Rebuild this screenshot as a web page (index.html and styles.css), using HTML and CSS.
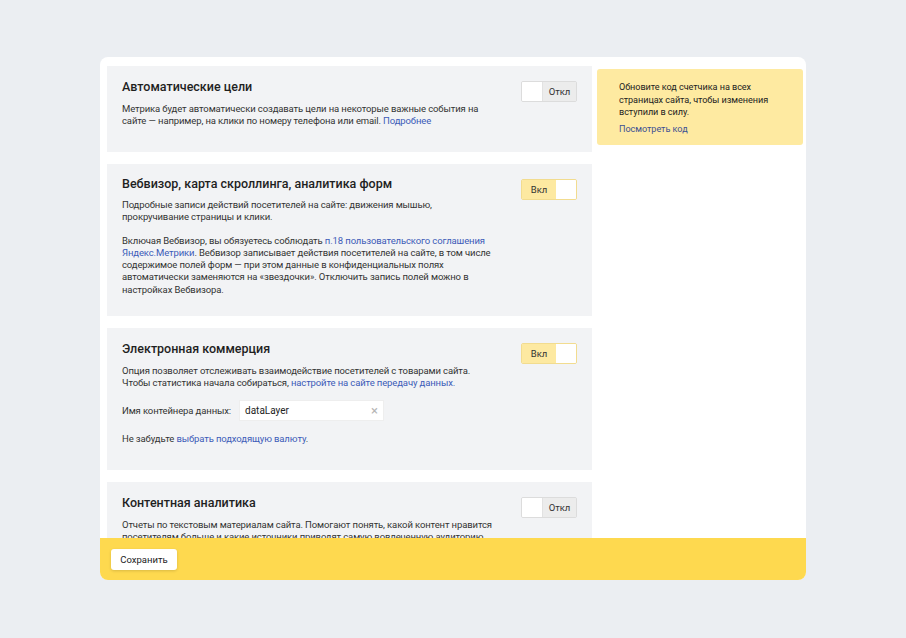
FILE: index.html
```html
<!DOCTYPE html>
<html lang="ru">
<head>
<meta charset="utf-8">
<link rel="stylesheet" href="styles.css">
</head>
<body>
<div class="card">
  <div class="content">
    <div class="main">
      <section class="opt opt-1">
        <div class="opt-text">
          <h2 class="title">Автоматические цели</h2>
          <p class="desc">Метрика будет автоматически создавать цели на некоторые важные события на сайте — например, на клики по номеру телефона или email. <a class="link">Подробнее</a></p>
        </div>
        <div class="toggle off"><span class="knob"></span><span class="label">Откл</span></div>
      </section>
      <section class="opt opt-2">
        <div class="opt-text">
          <h2 class="title">Вебвизор, карта скроллинга, аналитика форм</h2>
          <p class="desc">Подробные записи действий посетителей на сайте: движения мышью,<br>прокручивание страницы и клики.</p>
          <p class="desc gap">Включая Вебвизор, вы обязуетесь соблюдать <a class="link">п.18 пользовательского соглашения Яндекс.Метрики</a>. Вебвизор записывает действия посетителей на сайте, в том числе содержимое полей форм — при этом данные в конфиденциальных полях автоматически заменяются на «звездочки». Отключить запись полей можно в настройках Вебвизора.</p>
        </div>
        <div class="toggle on"><span class="label">Вкл</span><span class="knob"></span></div>
      </section>
      <section class="opt opt-3">
        <div class="opt-text">
          <h2 class="title">Электронная коммерция</h2>
          <p class="desc">Опция позволяет отслеживать взаимодействие посетителей с товарами сайта.<br>Чтобы статистика начала собираться, <a class="link">настройте на сайте передачу данных.</a></p>
          <div class="field">
            <span class="field-label">Имя контейнера данных:</span>
            <div class="input"><span class="input-val">dataLayer</span><span class="clear">×</span></div>
          </div>
          <p class="desc note">Не забудьте <a class="link">выбрать подходящую валюту</a>.</p>
        </div>
        <div class="toggle on"><span class="label">Вкл</span><span class="knob"></span></div>
      </section>
      <section class="opt opt-4">
        <div class="opt-text">
          <h2 class="title">Контентная аналитика</h2>
          <p class="desc">Отчеты по текстовым материалам сайта. Помогают понять, какой контент нравится посетителям больше и какие источники приводят самую вовлеченную аудиторию.</p>
        </div>
        <div class="toggle off"><span class="knob"></span><span class="label">Откл</span></div>
      </section>
    </div>
    <aside class="side">
      <div class="notice">
        <p class="notice-text">Обновите код счетчика на всех<br>страницах сайта, чтобы изменения<br>вступили в силу.</p>
        <a class="notice-link">Посмотреть код</a>
      </div>
    </aside>
  </div>
  <footer class="footer">
    <button class="save">Сохранить</button>
  </footer>
</div>
</body>
</html>
```
FILE: styles.css
```css
* { box-sizing: border-box; }
html, body { margin: 0; padding: 0; }
body {
  background: #ebeef2;
  font-family: Roboto, "Noto Sans", Arial, sans-serif;
  color: #222;
  padding: 57px 100px 0;
  height: 638px;
}
.card {
  width: 706px;
  height: 523px;
  background: #fff;
  border-radius: 8px;
  display: flex;
  flex-direction: column;
  overflow: hidden;
}
.content {
  flex: 1;
  overflow: hidden;
  display: flex;
  gap: 5px;
  padding: 9px 3px 0 7px;
}
.main {
  width: 485px;
  display: flex;
  flex-direction: column;
  gap: 12px;
}
.opt {
  background: #f2f3f5;
  display: flex;
  justify-content: space-between;
  padding: 13px 15px 0 15px;
  flex-shrink: 0;
}
.opt-1 { height: 86px; }
.opt-2 { height: 152px; padding-top: 12px; }
.opt-3 { height: 142px; }
.opt-4 { height: 90px; }
.opt-text { width: 374px; }
.title {
  margin: 0;
  font-size: 12.5px;
  font-weight: 500;
  line-height: 16px;
  color: #1f1f1f;
}
.desc {
  margin: 8px 0 0;
  font-size: 9.5px;
  letter-spacing: -0.12px;
  line-height: 12.3px;
  color: #333;
}
.opt-2 .desc:first-of-type { margin-top: 7px; }
.desc.gap { margin-top: 11px; }
.link { color: #3c5bb8; }
.toggle {
  width: 56px;
  height: 21px;
  border: 1px solid #dcdcdc;
  border-radius: 2px;
  display: flex;
  flex-shrink: 0;
  margin-top: 2px;
  font-size: 9.5px;
  overflow: hidden;
}
.opt-2 .toggle { margin-top: 3px; }
.toggle .knob { width: 20px; background: #fff; }
.toggle .label { flex: 1; display: flex; align-items: center; justify-content: center; color: #333; }
.toggle.off .label { background: #ececec; border-left: 1px solid #e2e2e2; }
.toggle.on { border-color: #f2dc8f; }
.toggle.on .label { background: #fde9a1; }
.field {
  display: flex;
  align-items: center;
  margin-top: 10px;
  gap: 8px;
}
.field-label { font-size: 9.5px; letter-spacing: -0.12px; color: #333; }
.input {
  width: 145px;
  height: 21px;
  background: #fff;
  border: 1px solid #eeeeee;
  display: flex;
  align-items: center;
  justify-content: space-between;
  padding: 0 5px 0 5px;
}
.input-val { font-size: 10px; color: #222; }
.clear { color: #b5b5b5; font-size: 13px; line-height: 1; }
.desc.note { margin-top: 12px; }
.side { width: 206px; }
.notice {
  background: #feeaa1;
  border-radius: 3px;
  margin-top: 3px;
  height: 76px;
  padding: 12px 22px 0;
}
.notice-text {
  margin: 0;
  font-size: 9.1px;
  letter-spacing: -0.05px;
  line-height: 12.5px;
  color: #222;
}
.notice-link {
  display: block;
  margin-top: 4px;
  font-size: 9.1px;
  letter-spacing: -0.05px;
  line-height: 12px;
  color: #3c4f93;
}
.footer {
  height: 42px;
  flex-shrink: 0;
  background: #fed94f;
  display: flex;
  align-items: center;
  padding: 0 11px;
}
.save {
  font-family: inherit;
  font-size: 9.5px;
  color: #222;
  background: #fff;
  border: none;
  border-radius: 3px;
  height: 21px;
  width: 66px;
  padding: 0;
  box-shadow: 0 1px 3px rgba(0,0,0,0.15);
}
```
